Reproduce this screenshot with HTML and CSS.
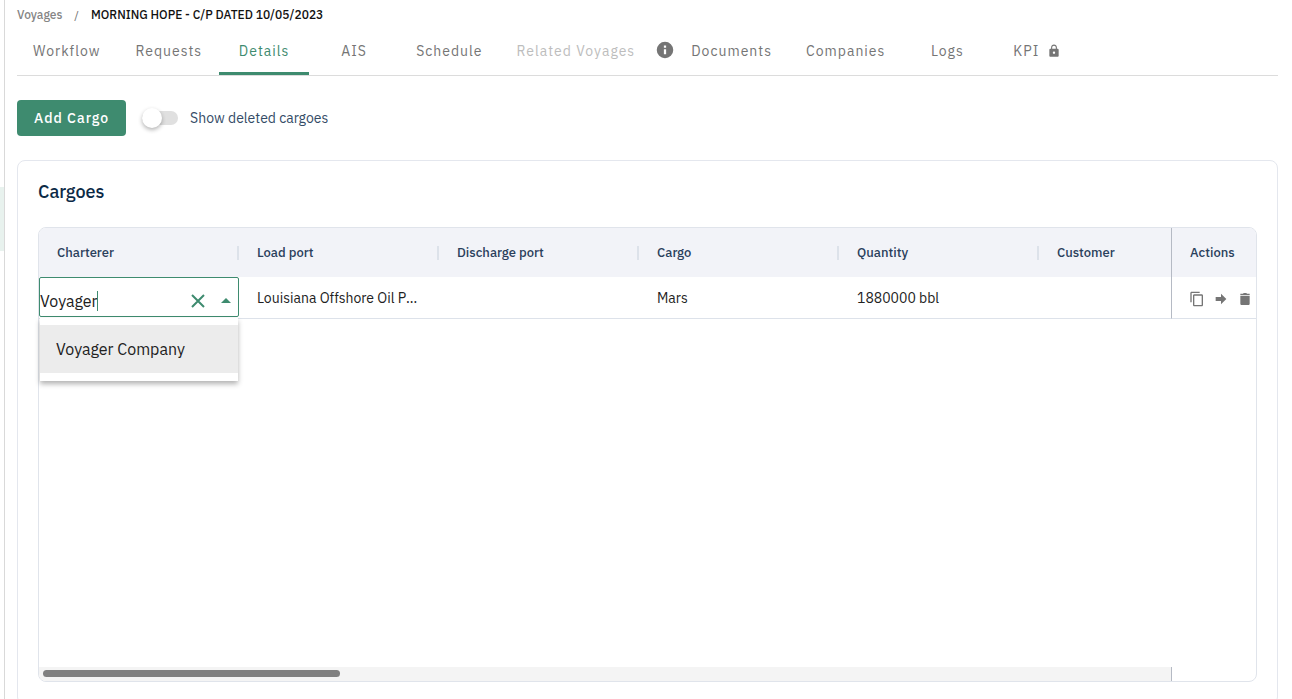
FILE: index.html
```html
<!DOCTYPE html>
<html lang="en">
<head>
<meta charset="utf-8">
<meta name="viewport" content="width=device-width, initial-scale=1">
<title>Morning Hope - Voyage details</title>
<link rel="stylesheet" href="styles.css">
</head>
<body>
<div class="shell">
  <div class="rail"><div class="rail-active"></div></div>
  <main class="page">
    <nav class="crumbs" aria-label="Breadcrumb">
      <a href="#voyages">Voyages</a><span class="slash">/</span><strong>MORNING HOPE - C/P DATED 10/05/2023</strong>
    </nav>
    <nav class="tabs" aria-label="Voyage sections">
      <a class="tab" href="#workflow">Workflow</a>
      <a class="tab" href="#requests">Requests</a>
      <a class="tab active" href="#details" aria-current="page">Details</a>
      <a class="tab" href="#ais">AIS</a>
      <a class="tab" href="#schedule">Schedule</a>
      <a class="tab disabled" href="#related" aria-disabled="true">Related Voyages</a>
      <svg class="info" viewBox="0 0 24 24" aria-hidden="true"><path d="M12 1a11 11 0 1 0 0 22 11 11 0 0 0 0-22zm1.500 16.500h-3V11h3zm0-8.500h-3V6h3z"/></svg>
      <a class="tab" href="#documents">Documents</a>
      <a class="tab" href="#companies">Companies</a>
      <a class="tab" href="#logs">Logs</a>
      <a class="tab" href="#kpi">KPI
        <svg class="lock" viewBox="0 0 24 24" aria-hidden="true"><path d="M18 8h-1V6c0-2.760-2.240-5-5-5S7 3.240 7 6v2H6c-1.100 0-2 .9-2 2v10c0 1.100.9 2 2 2h12c1.100 0 2-.9 2-2V10c0-1.100-.9-2-2-2zm-6 9c-1.100 0-2-.9-2-2s.9-2 2-2 2 .9 2 2-.9 2-2 2zm3.100-9H8.900V6c0-1.710 1.390-3.100 3.100-3.100s3.100 1.390 3.100 3.100z"/></svg>
      </a>
    </nav>
    <div class="toolbar">
      <button class="add" type="button">Add Cargo</button>
      <label class="toggle"><input type="checkbox" role="switch">Show deleted cargoes</label>
    </div>
    <section class="card">
      <h1>Cargoes</h1>
      <div class="grid">
        <table>
          <colgroup><col class="c"><col class="c"><col class="c"><col class="c"><col class="c"><col><col class="c-actions"></colgroup>
          <thead>
            <tr><th>Charterer</th><th>Load port</th><th>Discharge port</th><th>Cargo</th><th>Quantity</th><th>Customer</th><th class="pinned">Actions</th></tr>
          </thead>
          <tbody>
            <tr>
              <td class="editing">
                <div class="combo">
                  <div class="entry"><input type="text" size="7" value="Voyager" aria-label="Charterer"><span class="cursor"></span></div>
                  <button type="button" aria-label="Clear"><svg class="clear" viewBox="0 0 14 14"><path d="M1 1l12 12M13 1L1 13"/></svg></button>
                  <button type="button" aria-label="Close list"><svg class="caret" viewBox="0 0 10 5"><path d="M0 5l5-5 5 5z"/></svg></button>
                </div>
                <ul class="menu" role="listbox" aria-label="Charterers"><li role="option" aria-selected="true">Voyager Company</li></ul>
              </td>
              <td>Louisiana Offshore Oil Port</td><td></td><td>Mars</td><td>1880000 bbl</td><td></td>
              <td class="pinned">
                <div class="actions">
                  <button type="button" aria-label="Copy"><svg viewBox="0 0 24 24"><path d="M16 1H4c-1.100 0-2 .9-2 2v14h2V3h12zm3 4H8c-1.100 0-2 .9-2 2v14c0 1.100.9 2 2 2h11c1.100 0 2-.9 2-2V7c0-1.100-.9-2-2-2zm0 16H8V7h11z"/></svg></button>
                  <button type="button" aria-label="Move"><svg viewBox="0 0 24 24"><path d="M4 9h8V4l8 8-8 8v-5H4z"/></svg></button>
                  <button type="button" aria-label="Delete"><svg viewBox="0 0 24 24"><path d="M5 19c0 1.100.9 2 2 2h10c1.100 0 2-.9 2-2V7H5zM19 4h-4l-1-1h-4L9 4H5v2h14z"/></svg></button>
                </div>
              </td>
            </tr>
          </tbody>
        </table>
        <div class="scroll"><div class="track"><div class="thumb"></div></div></div>
      </div>
    </section>
  </main>
</div>
</body>
</html>
```
FILE: styles.css
```css
* { box-sizing: border-box; }
body {
  margin: 0;
  background: #fff;
  color: #212121;
  font: 14px/20px "IBM Plex Sans", Roboto, sans-serif;
}
button, input { font: inherit; color: inherit; }
a { color: inherit; text-decoration: none; }
svg { display: block; fill: currentColor; }

.shell { display: flex; height: 100vh; overflow: hidden; }
.rail { flex: none; width: 5px; border-right: 1px solid #d9d9d9; padding-top: 187px; }
.rail-active { height: 64px; background: #e8f2ee; }
.page {
  flex: 1;
  min-width: 0;
  height: calc(100vh + 6px);
  padding: 5px 14px 0 12px;
  display: flex;
  flex-direction: column;
}

.crumbs {
  display: flex;
  font-size: 12px;
  color: #757575;
}
.crumbs a { color: #858585; font-weight: 500; }
.crumbs .slash { padding: 0 12px; }
.crumbs strong { color: #111; font-weight: 500; }

.tabs {
  display: flex;
  align-items: center;
  height: 51px;
  border-bottom: 1px solid #dcdcdc;
  color: #757575;
  letter-spacing: 1px;
}
.tab {
  display: flex;
  align-items: center;
  justify-content: center;
  gap: 8px;
  min-width: 90px;
  height: 50px;
  padding: 5px 17px 0;
  border-bottom: 3px solid transparent;
  white-space: nowrap;
}
.tab:first-child { padding-left: 16px; padding-right: 18px; }
.tab.active { color: #3e8b6f; border-color: #3e8b6f; }
.tab.disabled { color: #bdbdbd; }
.info { width: 18px; height: 18px; margin-left: 4px; }
.lock { width: 14px; height: 14px; }

.toolbar { display: flex; align-items: center; gap: 16px; padding: 24px 0; }
.add {
  height: 36px;
  padding: 0 17px;
  border: 0;
  border-radius: 4px;
  background: #3e8b6f;
  color: #fff;
  font-weight: 500;
  letter-spacing: 1px;
}
.toggle { display: flex; align-items: center; gap: 12px; color: #334b66; }
.toggle input {
  appearance: none;
  display: flex;
  align-items: center;
  width: 36px;
  height: 14px;
  margin: 0;
  border-radius: 7px;
  background: #e0e0e0;
}
.toggle input::before {
  content: "";
  width: 20px;
  height: 20px;
  border-radius: 50%;
  background: #fff;
  box-shadow: 0 2px 4px rgba(0, 0, 0, .3);
}
.toggle input:checked { justify-content: flex-end; background: #9fc5b7; }

.card {
  flex: 1;
  display: flex;
  flex-direction: column;
  padding: 20px 20px 22px;
  border: 1px solid #e4e7ee;
  border-radius: 8px;
}
h1 { margin: 0 0 24px; font-weight: 500; font-size: 18px; line-height: 22px; color: #0c2a46; }
.grid {
  flex: 1;
  display: flex;
  flex-direction: column;
  border: 1px solid #e0e4eb;
  border-radius: 8px;
}
table { width: 100%; table-layout: fixed; border-collapse: separate; border-spacing: 0; }
.c { width: 200px; }
.c-actions { width: 85px; }
th {
  height: 49px;
  padding: 0 0 0 18px;
  background: linear-gradient(#dde2ea, #dde2ea) right center / 2px 14px no-repeat #f2f3f8;
  color: #2a405c;
  font-size: 13px;
  font-weight: 500;
  text-align: left;
}
th:first-child { border-top-left-radius: 7px; }
th:nth-child(6) { background: #f2f3f8; }
th.pinned { background: #f2f3f8; border-top-right-radius: 7px; }
td {
  height: 42px;
  padding: 0 18px;
  border-bottom: 1px solid #dde2ea;
  overflow: hidden;
  text-overflow: ellipsis;
  white-space: nowrap;
}
.pinned { border-left: 1px solid #b5bac4; }
td.pinned { padding: 2px 0 0 17px; }
.actions { display: flex; gap: 8px; color: #757575; }
.actions button, .combo button { flex: none; padding: 0; border: 0; background: none; }
.actions svg { width: 16px; height: 16px; }

td.editing { position: relative; padding: 0; overflow: visible; vertical-align: top; }
.combo {
  display: flex;
  align-items: center;
  gap: 16px;
  height: 40px;
  padding: 7px 7px 0 0;
  border: 1px solid #3e8b6f;
  border-radius: 2px;
  color: #3e8b6f;
}
.entry { flex: 1; display: flex; align-items: center; min-width: 0; }
.combo input {
  field-sizing: content;
  padding: 0;
  border: 0;
  outline: 0;
  background: none;
  color: #212121;
  caret-color: transparent;
  font-size: 16px;
}
.cursor { width: 1px; height: 20px; background: #3e8b6f; }
.clear { width: 14px; height: 14px; fill: none; stroke: currentColor; stroke-width: 2; }
.caret { width: 10px; height: 5px; }
.menu {
  position: absolute;
  top: 100%;
  left: 1px;
  right: 1px;
  margin: 0;
  padding: 7px 0 8px;
  background: #fff;
  box-shadow: 0 3px 5px rgba(0, 0, 0, .3);
  list-style: none;
}
.menu li { padding: 0 16px; background: #ececec; font-size: 16px; line-height: 48px; }

.scroll { display: flex; margin-top: auto; padding-right: 84px; }
.track {
  flex: 1;
  height: 14px;
  padding: 3px 4px;
  border-right: 1px solid #b5bac4;
  border-bottom-left-radius: 7px;
  background: #f4f4f4;
}
.thumb { width: 297px; height: 7px; border-radius: 4px; background: #808080; }
```
